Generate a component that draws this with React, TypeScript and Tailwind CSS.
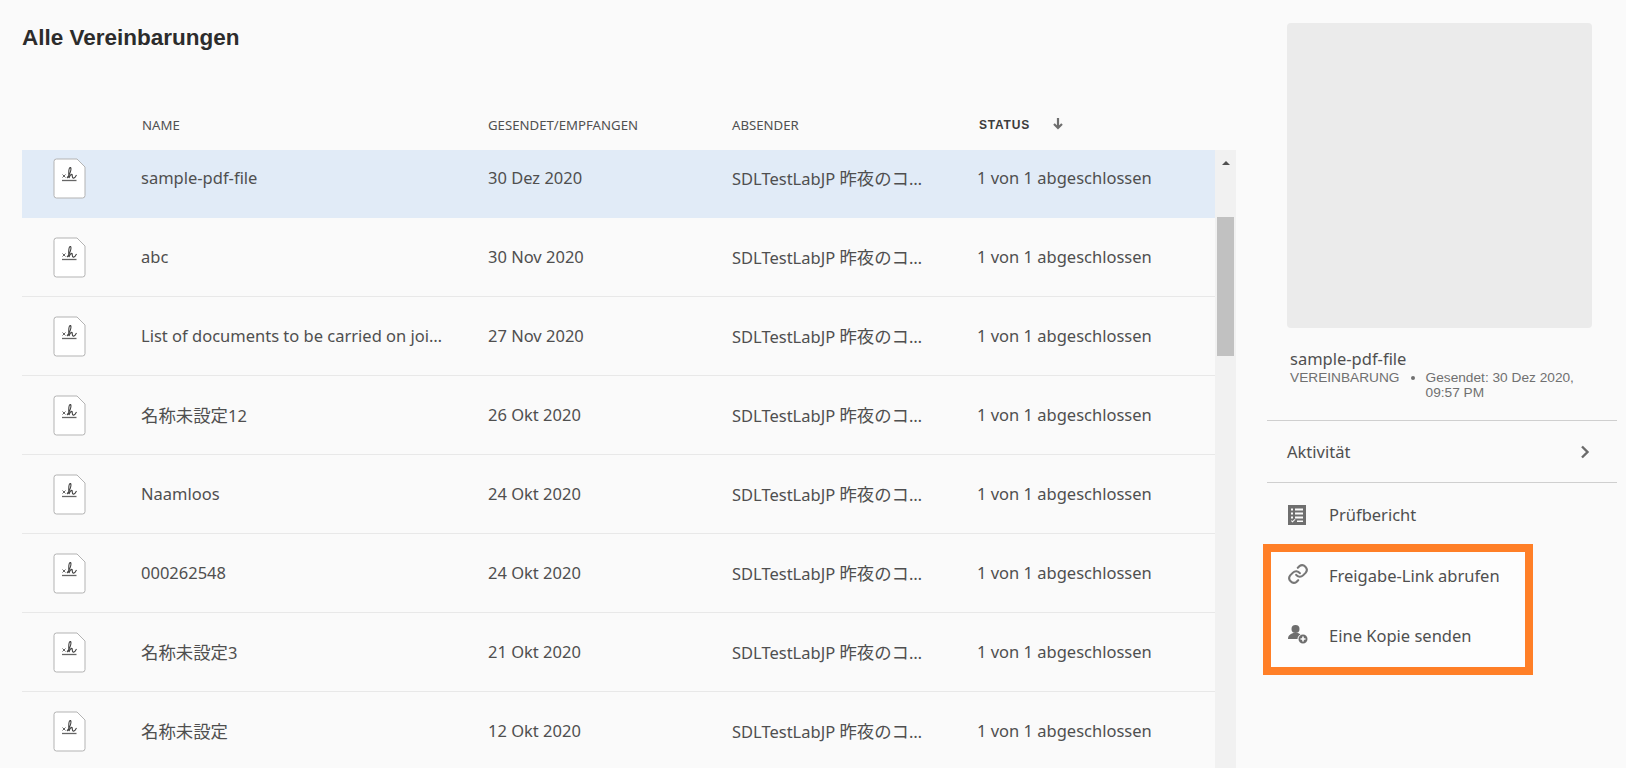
import type { ReactNode } from "react";

function Cjk({ children }: { children: ReactNode }) {
  return <span className="text-[17.4px]">{children}</span>;
}

const rows: [ReactNode, string][] = [
  ["sample-pdf-file", "30 Dez 2020"],
  ["abc", "30 Nov 2020"],
  ["List of documents to be carried on joining.pdf", "27 Nov 2020"],
  [<><Cjk>名称未設定</Cjk>12</>, "26 Okt 2020"],
  ["Naamloos", "24 Okt 2020"],
  ["000262548", "24 Okt 2020"],
  [<><Cjk>名称未設定</Cjk>3</>, "21 Okt 2020"],
  [<Cjk>名称未設定</Cjk>, "12 Okt 2020"],
];

function DocIcon() {
  return (
    <svg width="33" height="41" viewBox="0 0 33 41" fill="none">
      <path d="M3.5 1H24L32 9V37.5A2.5 2.5 0 0 1 29.5 40H3.5A2.5 2.5 0 0 1 1 37.5V3.5A2.5 2.5 0 0 1 3.5 1Z" fill="#fff" stroke="#b3b3b3" strokeWidth="1" />
      <path d="M9.5 16.5L12.5 19.5M12.5 16.5L9.5 19.5" stroke="#555" strokeWidth="0.9" />
      <path d="M14 20C16.5 17.5 19 11 17.5 9.5C15.5 9 15.5 16 16 20C17 17.5 18 16 19 16.5C19.5 17 19 19.5 20 20C21 20.5 22.5 19 23.5 17" stroke="#444" strokeWidth="1.1" />
      <path d="M9 22.5H23.5" stroke="#666" strokeWidth="1.3" />
    </svg>
  );
}

function Row({ name, date, selected }: { name: ReactNode; date: string; selected: boolean }) {
  return (
    <div className={`flex h-[79px] items-center border-b ${selected ? "border-[#e1ebf7] bg-[#e1ebf7]" : "border-[#e8e8e8]"}`}>
      <div className="w-[119px] pl-[31px] shrink-0"><DocIcon /></div>
      <div className="w-[347px] shrink-0 truncate pr-[41px]">{name}</div>
      <div className="w-[244px] shrink-0">{date}</div>
      <div className="w-[245px] shrink-0 truncate pr-[53px]">SDLTestLabJP <Cjk>昨夜のコンサート</Cjk></div>
      <div className="shrink-0">1 von 1 abgeschlossen</div>
    </div>
  );
}

export default function App() {
  return (
    <div className="flex h-screen w-full overflow-hidden bg-[#fafafa] font-['Noto_Sans','Noto_Sans_CJK_JP',sans-serif] text-[#4f4f4f]">
      <div className="w-[1236px] shrink-0 pl-[22px] flex flex-col">
        <h1 className="mt-[25px] h-[26px] text-[22.5px] leading-[26px] font-bold font-['Liberation_Sans',sans-serif] text-[#2c2c2c]">Alle Vereinbarungen</h1>
        <div className="flex h-[99px] items-end pb-[17px] text-[13.2px] leading-[16px] text-[#505050] shrink-0">
          <div className="w-[120px]"></div>
          <div className="w-[346px]">NAME</div>
          <div className="w-[244px]">GESENDET/EMPFANGEN</div>
          <div className="w-[247px]">ABSENDER</div>
          <div className="flex items-center font-['Liberation_Sans',sans-serif] font-bold text-[12px] tracking-[0.8px] text-[#3c3c3c]">
            STATUS
            <svg className="ml-[22px] -mt-[3px]" width="12" height="13" viewBox="0 0 12 13" fill="none">
              <path d="M6 1V11M2 7L6 11L10 7" stroke="#6e6e6e" strokeWidth="2.2" />
            </svg>
          </div>
        </div>
        <div className="flex flex-1 min-h-0">
          <div className="flex-1 min-w-0 overflow-hidden text-[16.5px] leading-[22px]">
            <div className="-mt-[11px]">
              {rows.map((r, i) => (
                <Row key={i} name={r[0]} date={r[1]} selected={i === 0} />
              ))}
            </div>
          </div>
          <div className="w-[21px] shrink-0 bg-[#f1f1f1] flex flex-col items-center">
            <div className="mt-[11px] w-0 h-0 border-x-[4px] border-x-transparent border-b-[4px] border-b-[#505050]"></div>
            <div className="mt-[52px] w-[17px] h-[139px] bg-[#c1c1c1]"></div>
          </div>
        </div>
      </div>
      <div className="w-[390px] shrink-0 pl-[31px] pr-[9px] text-[16.5px] leading-[22px]">
        <div className="ml-[20px] mt-[23px] h-[305px] w-[305px] rounded-[4px] bg-[#ebebeb]"></div>
        <div className="ml-[23px] mt-[20px] h-[22px]">sample-pdf-file</div>
        <div className="ml-[23px] flex font-['Liberation_Sans',sans-serif] text-[13.7px] leading-[15px] text-[#707070]">
          <span>VEREINBARUNG</span>
          <span className="mx-[11px] mt-[6px] h-[4px] w-[4px] rounded-full bg-[#707070]"></span>
          <span className="w-[170px]">Gesendet: 30 Dez 2020, 09:57 PM</span>
        </div>
        <div className="mt-[20px] flex h-[63px] items-center justify-between border-y border-[#cfcfcf] pl-[20px] pr-[27px]">
          <span>Aktivität</span>
          <svg width="10" height="14" viewBox="0 0 10 14" fill="none"><path d="M2 1.5L7.5 7L2 12.5" stroke="#6a6a6a" strokeWidth="2.4" /></svg>
        </div>
        <div className="flex h-[61px] items-center pl-[21px] pt-[2px]">
          <svg className="mr-[23px]" width="18" height="20" viewBox="0 0 18 20" fill="#6e6e6e">
            <path fillRule="evenodd" d="M0 0H18V20H0ZM3 3.5V5.5H5V3.5ZM7 3.5V5.5H15V3.5ZM3 7.5V9.5H5V7.5ZM7 7.5V9.5H15V7.5ZM3 11.5V13.5H5V11.5ZM7 11.5V13.5H15V11.5ZM3 16L4.5 17.5L7.5 14.5L6.8 14L4.5 16.1L3.7 15.3ZM9 15.5V17H15V15.5Z" />
          </svg>
          <span>Prüfbericht</span>
        </div>
        <div className="-ml-[4px] w-[270px] h-[131px] border-[8px] border-[#ff7f27] bg-[#fdfdfd] pl-[16px] pt-[13px] flex flex-col gap-[38px]">
          <div className="flex h-[22px] items-center">
            <svg className="mr-[20px] -mt-[5px]" width="22" height="22" viewBox="0 0 24 24" fill="none" stroke="#777" strokeWidth="2.3" strokeLinecap="round" strokeLinejoin="round">
              <path d="M10 13a5 5 0 0 0 7.5.5l3-3a5 5 0 0 0-7-7l-1.7 1.7" />
              <path d="M14 11a5 5 0 0 0-7.5-.5l-3 3a5 5 0 0 0 7 7l1.7-1.7" />
            </svg>
            <span>Freigabe-Link abrufen</span>
          </div>
          <div className="flex h-[22px] items-center">
            <svg className="ml-[1px] mr-[21px] -mt-[4px]" width="20" height="20" viewBox="0 0 20 20" fill="#6e6e6e">
              <circle cx="7.5" cy="5" r="4" />
              <path d="M0 15C0 11 3 10 5 9H10C11 9.5 12 10 12.5 10.5C10.5 11.5 9.5 13 9.5 15Z" />
              <path fillRule="evenodd" d="M15 10.5A4.5 4.5 0 1 0 15 19.5A4.5 4.5 0 1 0 15 10.5ZM14.2 12.5H15.8V14.2H17.5V15.8H15.8V17.5H14.2V15.8H12.5V14.2H14.2Z" />
            </svg>
            <span>Eine Kopie senden</span>
          </div>
        </div>
      </div>
    </div>
  );
}
